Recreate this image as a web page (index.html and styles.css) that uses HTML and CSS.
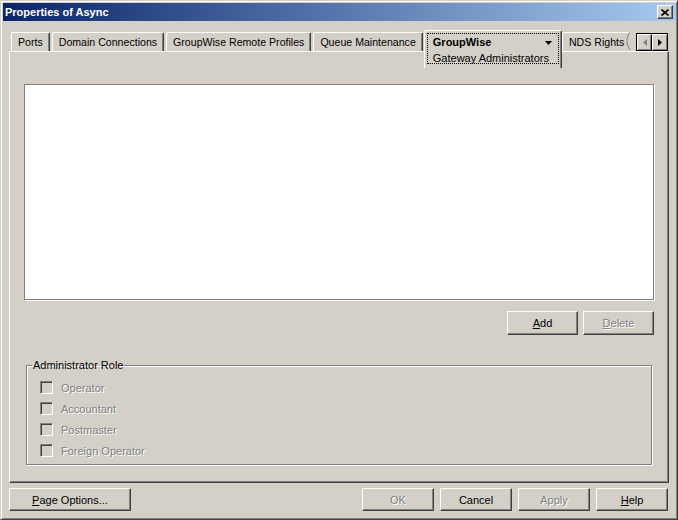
FILE: index.html
```html
<html>
    <head>
        <title>Properties of Async</title>
        <link rel="stylesheet" href="styles.css">
    </head>
    <body>
        <div class="window">
            <div class="titlebar">
                <span class="title">Properties of Async</span>
                <span class="close">
                    <svg width="8" height="7" viewBox="0 0 8 7"><path d="M0.5 0.5 L7.5 6.5 M7.5 0.5 L0.5 6.5" stroke="#000" stroke-width="1.6"/></svg>
                </span>
            </div>

            <div class="tabstrip">
                <div class="tab">Ports</div>
                <div class="tab">Domain Connections</div>
                <div class="tab">GroupWise Remote Profiles</div>
                <div class="tab">Queue Maintenance</div>
                <div class="tab tab-active">
                    <div class="focus">
                        <div class="tab-head">
                            <b>GroupWise</b>
                            <svg width="7" height="4" viewBox="0 0 7 4"><polygon points="0,0 7,0 3.5,4" fill="#000"/></svg>
                        </div>
                        <div class="tab-sub">Gateway Administrators</div>
                    </div>
                </div>
                <div class="tab tab-clipped">
                    NDS Rights
                    <svg class="torn" width="5" height="18" viewBox="0 0 5 18"><path d="M4 0 C0 5 0 12 4 18" stroke="#808080" fill="none"/></svg>
                </div>
                <div class="tab-scroll">
                    <span class="scroll-btn">
                        <svg width="4" height="7" viewBox="0 0 4 7"><polygon points="4,0 0,3.5 4,7" fill="#808080"/></svg>
                    </span>
                    <span class="scroll-btn">
                        <svg width="4" height="7" viewBox="0 0 4 7"><polygon points="0,0 4,3.5 0,7" fill="#000"/></svg>
                    </span>
                </div>
            </div>

            <div class="panel">
                <div class="listbox"></div>
                <div class="list-actions">
                    <button class="btn"><u>A</u>dd</button>
                    <button class="btn" disabled><u>D</u>elete</button>
                </div>
                <fieldset class="group">
                    <legend>Administrator Role</legend>
                    <div class="check"><span class="box"></span>Operator</div>
                    <div class="check"><span class="box"></span>Accountant</div>
                    <div class="check"><span class="box"></span>Postmaster</div>
                    <div class="check"><span class="box"></span>Foreign Operator</div>
                </fieldset>
            </div>

            <div class="footer">
                <button class="btn btn-wide"><u>P</u>age Options...</button>
                <div class="footer-right">
                    <button class="btn" disabled>OK</button>
                    <button class="btn">Cancel</button>
                    <button class="btn" disabled>Apply</button>
                    <button class="btn"><u>H</u>elp</button>
                </div>
            </div>
        </div>
    </body>
</html>
```

FILE: styles.css
```css
body {
    margin: 0;
    font-family: "Liberation Sans", Arial, sans-serif;
    font-size: 11px;
    color: #000;
    background: #d4d0c8;
}
.window {
    width: 678px;
    height: 520px;
    box-sizing: border-box;
    background: #d4d0c8;
    border: 1px solid;
    border-color: #d4d0c8 #404040 #404040 #d4d0c8;
    box-shadow: inset 1px 1px #fff, inset -1px -1px #808080;
    padding: 2px 1px 2px 2px;
}
.titlebar {
    height: 18px;
    display: flex;
    align-items: center;
    justify-content: space-between;
    background: linear-gradient(to right, #0a246a, #a6caf0);
    padding: 0 3px 0 2px;
}
.title {
    color: #fff;
    font-weight: bold;
    font-size: 11px;
}
.close {
    width: 16px;
    height: 14px;
    box-sizing: border-box;
    display: flex;
    align-items: center;
    justify-content: center;
    background: #d4d0c8;
    border: 1px solid;
    border-color: #fff #404040 #404040 #fff;
    box-shadow: inset -1px -1px #808080;
}

/* tabs */
.tabstrip {
    display: flex;
    align-items: flex-start;
    height: 21px;
    margin: 9px 7px 0 6px;
    padding-left: 2px;
    font-size: 10.6px;
}
.tab {
    flex-shrink: 0;
    height: 19px;
    box-sizing: border-box;
    margin-top: 2px;
    margin-right: 2px;
    padding: 3px 6px 0 6px;
    white-space: nowrap;
    border-top: 1px solid #fff;
    border-left: 1px solid #fff;
    border-right: 1px solid #404040;
    border-radius: 2px 2px 0 0;
    box-shadow: inset -1px 0 #808080;
}
.tab-active {
    position: relative;
    z-index: 2;
    height: 38px;
    margin-top: 0;
    margin-left: -1px;
    margin-right: 0;
    padding: 2px 2px 3px 2px;
    background: #d4d0c8;
}
.focus {
    border: 1px dotted #000;
    height: 31px;
    box-sizing: border-box;
    padding: 1px 9px 0 5px;
    line-height: 15px;
    font-size: 11px;
}
.tab-head {
    display: flex;
    align-items: center;
    justify-content: space-between;
}
.tab-head svg {
    margin-right: -3px;
}
.tab-sub {
    padding-top: 1px;
}
.tab-clipped {
    border-right: none;
    box-shadow: none;
    padding-right: 0;
    border-radius: 2px 0 0 0;
    display: flex;
    align-items: flex-start;
    gap: 2px;
}
.torn {
    margin-top: -4px;
}
.tab-scroll {
    flex-shrink: 0;
    display: flex;
    margin-left: auto;
    margin-right: 1px;
    margin-top: 3px;
    border: 1px solid #000;
}
.scroll-btn {
    width: 15px;
    height: 16px;
    box-sizing: border-box;
    display: flex;
    align-items: center;
    justify-content: center;
    border-top: 1px solid #fff;
    border-left: 1px solid #fff;
    border-right: 1px solid #000;
    box-shadow: inset -1px -1px #808080;
}
.scroll-btn:last-child {
    border-right: none;
}

/* page */
.panel {
    height: 432px;
    box-sizing: border-box;
    margin: 0 7px 0 6px;
    padding: 32px 14px 0 14px;
    border: 1px solid;
    border-color: #fff #404040 #404040 #fff;
    box-shadow: inset -1px -1px #808080;
}
.listbox {
    height: 216px;
    box-sizing: border-box;
    background: #fff;
    border: 1px solid #808080;
    box-shadow: 1px 1px 0 #fff;
}
.list-actions {
    display: flex;
    justify-content: flex-end;
    gap: 5px;
    margin-top: 11px;
}
.list-actions .btn {
    width: 71px;
    height: 24px;
}
.btn {
    width: 72px;
    height: 23px;
    box-sizing: border-box;
    padding: 0;
    font-family: "Liberation Sans", Arial, sans-serif;
    font-size: 11px;
    color: #000;
    background: #d4d0c8;
    border: 1px solid;
    border-color: #fff #404040 #404040 #fff;
    box-shadow: inset -1px -1px #808080;
}
.btn:disabled {
    color: #808080;
    text-shadow: 1px 1px 0 #fff;
}
.btn-wide {
    width: 122px;
}
.group {
    margin: 24px 2px 0 2px;
    padding: 5px 13px 3px 13px;
    border: 1px solid #808080;
    box-shadow: inset 1px 1px #fff, 1px 1px 0 #fff;
}
.group legend {
    padding: 0 1px;
    margin-left: -8px;
    line-height: 13px;
}
.check {
    display: flex;
    align-items: center;
    height: 21px;
    color: #808080;
    text-shadow: 1px 1px 0 #fff;
}
.box {
    width: 13px;
    height: 13px;
    box-sizing: border-box;
    margin-right: 8px;
    background: #d4d0c8;
    border: 1px solid;
    border-color: #808080 #fff #fff #808080;
    box-shadow: inset 1px 1px #404040, inset -1px -1px #d4d0c8;
}

/* bottom buttons */
.footer {
    display: flex;
    justify-content: space-between;
    margin: 5px 8px 0 6px;
}
.footer-right {
    display: flex;
    gap: 6px;
}
```
